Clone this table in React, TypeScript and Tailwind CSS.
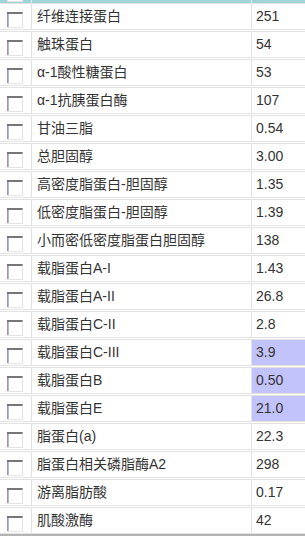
import React from 'react';

type Item = { name: string; value: string; flagged?: boolean };

const items: Item[] = [
  { name: '纤维连接蛋白', value: '251' },
  { name: '触珠蛋白', value: '54' },
  { name: 'α-1酸性糖蛋白', value: '53' },
  { name: 'α-1抗胰蛋白酶', value: '107' },
  { name: '甘油三脂', value: '0.54' },
  { name: '总胆固醇', value: '3.00' },
  { name: '高密度脂蛋白-胆固醇', value: '1.35' },
  { name: '低密度脂蛋白-胆固醇', value: '1.39' },
  { name: '小而密低密度脂蛋白胆固醇', value: '138' },
  { name: '载脂蛋白A-I', value: '1.43' },
  { name: '载脂蛋白A-II', value: '26.8' },
  { name: '载脂蛋白C-II', value: '2.8' },
  { name: '载脂蛋白C-III', value: '3.9', flagged: true },
  { name: '载脂蛋白B', value: '0.50', flagged: true },
  { name: '载脂蛋白E', value: '21.0', flagged: true },
  { name: '脂蛋白(a)', value: '22.3' },
  { name: '脂蛋白相关磷脂酶A2', value: '298' },
  { name: '游离脂肪酸', value: '0.17' },
  { name: '肌酸激酶', value: '42' },
];

const CheckBox: React.FC = () => (
  <div className="w-[16px] h-[16px] flex border-t-2 border-t-[#777777] border-r border-r-[#e4e4e4] border-b border-b-[#e4e4e4] bg-white">
    <div className="w-[1px] h-full bg-[#b89088]" />
    <div className="w-[1px] h-full bg-[#a8b8f0]" />
  </div>
);

const App: React.FC = () => {
  return (
    <div
      className="w-[305px] h-[540px] bg-white overflow-hidden text-[14px] text-[#333333]"
      style={{ fontFamily: '"Liberation Sans", "Noto Sans CJK SC", sans-serif' }}
    >
      <div className="h-[3px] flex bg-[#9fd4d9]">
        <div className="w-[32px] border-r border-[#d8eef0] relative">
          <div className="absolute left-[7px] top-0 w-[16px] h-[2px] bg-white border-x border-b border-[#e0e0e0]" />
        </div>
        <div className="w-[220px] border-r border-[#d8eef0]" />
        <div className="flex-1" />
      </div>
      <div className="flex flex-col gap-[1px] border-b-2 border-[#b4b4b4]">
        {items.map((item) => (
          <div key={item.name} className="h-[27px] flex border-y border-[#e2e2e2]">
            <div className="w-[32px] border-r border-[#e2e2e2] pl-[7px] pt-[8px]">
              <CheckBox />
            </div>
            <div className="w-[220px] border-r border-[#e2e2e2] pl-[5px] flex items-center whitespace-nowrap">
              {item.name}
            </div>
            <div
              className={`flex-1 pl-[4px] flex items-center ${item.flagged ? 'bg-[#c3c3fc]' : ''}`}
            >
              {item.value}
            </div>
          </div>
        ))}
      </div>
    </div>
  );
};

export default App;
